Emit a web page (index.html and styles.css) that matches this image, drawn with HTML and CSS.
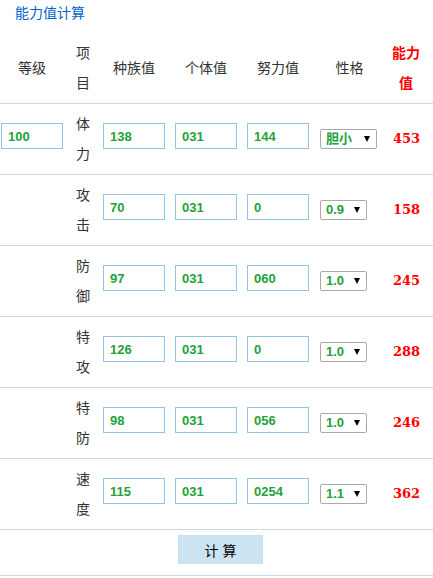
FILE: index.html
```html
<!DOCTYPE html>
<html lang="zh-CN">
<head>
<meta charset="utf-8">
<title>能力值计算</title>
<link rel="stylesheet" href="styles.css">
</head>
<body>
<div class="title">能力值计算</div>
<table class="calc">
  <colgroup>
    <col class="c-lv"><col class="c-item"><col class="c-num"><col class="c-num"><col class="c-num"><col class="c-nat"><col class="c-val">
  </colgroup>
  <thead>
    <tr>
      <th>等级</th>
      <th class="item">项目</th>
      <th>种族值</th>
      <th>个体值</th>
      <th>努力值</th>
      <th>性格</th>
      <th class="val-head">能力值</th>
    </tr>
  </thead>
  <tbody>
    <tr>
      <td class="lv"><input class="box" type="text" value="100"></td>
      <td class="item">体力</td>
      <td class="num"><input class="box" type="text" value="138"></td>
      <td class="num"><input class="box" type="text" value="031"></td>
      <td class="num"><input class="box" type="text" value="144"></td>
      <td class="nat"><span class="pick"><select class="sel wide"><option>胆小</option></select></span></td>
      <td class="val">453</td>
    </tr>
    <tr>
      <td class="lv"></td>
      <td class="item">攻击</td>
      <td class="num"><input class="box" type="text" value="70"></td>
      <td class="num"><input class="box" type="text" value="031"></td>
      <td class="num"><input class="box" type="text" value="0"></td>
      <td class="nat"><span class="pick"><select class="sel"><option>0.9</option><option>1.0</option><option>1.1</option></select></span></td>
      <td class="val">158</td>
    </tr>
    <tr>
      <td class="lv"></td>
      <td class="item">防御</td>
      <td class="num"><input class="box" type="text" value="97"></td>
      <td class="num"><input class="box" type="text" value="031"></td>
      <td class="num"><input class="box" type="text" value="060"></td>
      <td class="nat"><span class="pick"><select class="sel"><option>1.0</option><option>0.9</option><option>1.1</option></select></span></td>
      <td class="val">245</td>
    </tr>
    <tr>
      <td class="lv"></td>
      <td class="item">特攻</td>
      <td class="num"><input class="box" type="text" value="126"></td>
      <td class="num"><input class="box" type="text" value="031"></td>
      <td class="num"><input class="box" type="text" value="0"></td>
      <td class="nat"><span class="pick"><select class="sel"><option>1.0</option><option>0.9</option><option>1.1</option></select></span></td>
      <td class="val">288</td>
    </tr>
    <tr>
      <td class="lv"></td>
      <td class="item">特防</td>
      <td class="num"><input class="box" type="text" value="98"></td>
      <td class="num"><input class="box" type="text" value="031"></td>
      <td class="num"><input class="box" type="text" value="056"></td>
      <td class="nat"><span class="pick"><select class="sel"><option>1.0</option><option>0.9</option><option>1.1</option></select></span></td>
      <td class="val">246</td>
    </tr>
    <tr>
      <td class="lv"></td>
      <td class="item">速度</td>
      <td class="num"><input class="box" type="text" value="115"></td>
      <td class="num"><input class="box" type="text" value="031"></td>
      <td class="num"><input class="box" type="text" value="0254"></td>
      <td class="nat"><span class="pick"><select class="sel"><option>1.1</option><option>0.9</option><option>1.0</option></select></span></td>
      <td class="val">362</td>
    </tr>
    <tr>
      <td class="action" colspan="7"><button class="go" type="button">计 算</button></td>
    </tr>
  </tbody>
</table>
</body>
</html>
```
FILE: styles.css
```css
html, body {
  margin: 0;
  padding: 0;
  background: #fff;
}
body {
  width: 433px;
  font-family: "Liberation Sans", "Noto Sans CJK SC", sans-serif;
  font-size: 14px;
  color: #333;
}
.title {
  padding: 3px 0 9px 15px;
  line-height: 20px;
  color: #0066cc;
}
.calc {
  width: 433px;
  table-layout: fixed;
  border-collapse: collapse;
  border-spacing: 0;
}
.c-lv { width: 64px; }
.c-item { width: 34px; }
.c-num { width: 72px; }
.c-nat { width: 71px; }
.c-val { width: 48px; }

.calc th {
  font-weight: normal;
  line-height: 30px;
  padding: 6px 0 5px;
  text-align: center;
  vertical-align: middle;
  border-bottom: 1px solid #cbd9e4;
}
.calc th.item {
  text-align: left;
  padding-left: 12px;
  padding-right: 8px;
}
.calc th.val-head {
  color: #ff0000;
  font-weight: bold;
  padding-left: 2px;
  padding-right: 8px;
}
.calc td {
  padding: 5px 0;
  vertical-align: middle;
  border-bottom: 1px solid #cbd9e4;
  line-height: 30px;
}
.calc td.lv { padding-left: 1px; }
.calc td.item {
  padding-left: 12px;
  padding-right: 8px;
}
.calc td.num { padding-left: 5px; }
.calc td.nat { padding-left: 6px; }
.calc td.val {
  padding-left: 8px;
  line-height: 20px;
  color: #ff0000;
  font-family: "DejaVu Serif", "Liberation Serif", serif;
  font-weight: bold;
  font-size: 13px;
}
.box {
  display: block;
  box-sizing: border-box;
  width: 62px;
  height: 26px;
  margin: 0 0 6px;
  padding: 0 0 0 6px;
  border: 1px solid #92c6e0;
  border-radius: 0;
  background: #fff;
  font-family: "Liberation Sans", "Noto Sans CJK SC", sans-serif;
  font-weight: bold;
  font-size: 13px;
  color: #22a23a;
  outline: none;
}
.pick {
  position: relative;
  display: block;
  width: fit-content;
  height: 20px;
}
.pick::after {
  content: "";
  position: absolute;
  right: 7px;
  top: 7px;
  border-left: 3.5px solid transparent;
  border-right: 3.5px solid transparent;
  border-top: 6px solid #000;
  pointer-events: none;
}
.sel {
  display: block;
  appearance: none;
  -webkit-appearance: none;
  box-sizing: border-box;
  width: 47px;
  height: 20px;
  margin: 0;
  padding: 0 0 0 5px;
  border: 1px solid #a9a9a9;
  border-radius: 2px;
  background: #fff;
  font-family: "Liberation Sans", "Noto Sans CJK SC", sans-serif;
  font-weight: bold;
  font-size: 13px;
  line-height: 18px;
  color: #22a23a;
  outline: none;
}
.sel.wide { width: 57px; }
.calc td.action {
  padding: 5px 0 11px 8px;
  text-align: center;
  line-height: normal;
}
.go {
  width: 85px;
  height: 29px;
  margin: 0;
  padding: 0;
  border: 1px solid #c6e0f0;
  background: #cce3f2;
  font-family: "Liberation Sans", "Noto Sans CJK SC", sans-serif;
  font-size: 14px;
  color: #000;
  cursor: pointer;
}
```
